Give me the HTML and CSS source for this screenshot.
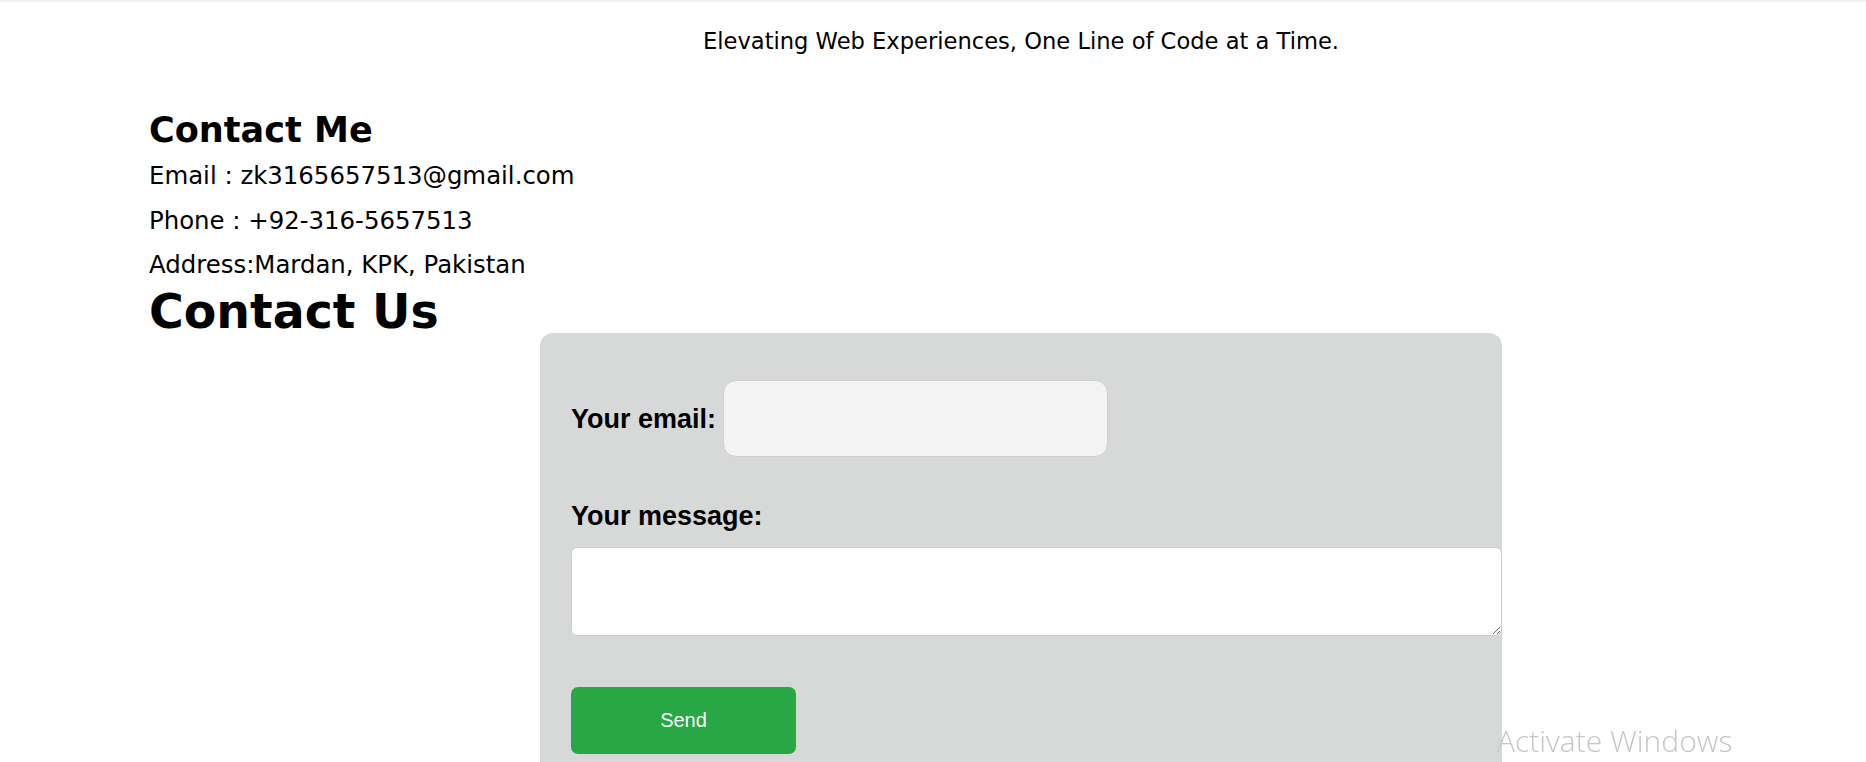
FILE: index.html
```html
<!DOCTYPE html>
<html lang="en">
<head>
<meta charset="utf-8">
<title>Contact</title>
<link rel="stylesheet" href="styles.css">
</head>
<body>
  <header class="top">
    <p class="tagline">Elevating Web Experiences, One Line of Code at a Time.</p>
  </header>
  <main class="contact">
    <section class="info">
      <h2 class="info-title">Contact Me</h2>
      <p class="info-line">Email : zk3165657513@gmail.com</p>
      <p class="info-line">Phone : +92-316-5657513</p>
      <p class="info-line">Address:Mardan, KPK, Pakistan</p>
    </section>
    <h1 class="form-title">Contact Us</h1>
    <form class="form-box">
      <div class="email-row">
        <label class="label" for="email">Your email:</label>
        <input class="email-input" id="email" type="email">
      </div>
      <label class="label msg-label" for="msg">Your message:</label>
      <textarea class="msg-input" id="msg"></textarea>
      <button class="send" type="button">Send</button>
    </form>
  </main>
  <div class="watermark">Activate Windows</div>
</body>
</html>
```
FILE: styles.css
```css
html, body {
  margin: 0;
  padding: 0;
  background: #ffffff;
  color: #000;
  font-family: "DejaVu Sans", Verdana, sans-serif;
  overflow: hidden;
}

.top {
  border-top: 2px solid #f2f2f2;
  padding: 26px 0 0 176px;
  text-align: center;
}

.tagline {
  margin: 0;
  font-size: 22.6px;
  line-height: 27px;
}

.contact {
  padding-left: 149px;
}

.info {
  padding-top: 55px;
}

.info-title {
  margin: 0;
  font-size: 35.1px;
  line-height: 40px;
  font-weight: bold;
}

.info-line {
  margin: 12px 0 0;
  font-size: 24.4px;
  line-height: 28px;
}

.info-line + .info-line {
  margin-top: 16.5px;
}

.form-title {
  margin: 12px 0 0;
  font-size: 47.4px;
  line-height: 42px;
  font-weight: bold;
}

.form-box {
  margin: 0 0 0 391px;
  width: 962px;
  min-height: 460px;
  box-sizing: border-box;
  padding: 47px 0 0 31px;
  background: #d7d9d9;
  border-radius: 13px;
  display: flex;
  flex-direction: column;
  align-items: flex-start;
}

.email-row {
  display: flex;
  align-items: center;
  gap: 7px;
}

.label {
  font-family: "Liberation Sans", Arial, sans-serif;
  font-weight: bold;
  font-size: 27px;
  line-height: 30px;
}

.email-input {
  width: 385px;
  height: 77px;
  box-sizing: border-box;
  background: #f3f3f3;
  border: 1px solid #cfcfcf;
  border-radius: 13px;
  margin: 0;
}

.msg-label {
  margin-top: 44px;
}

.msg-input {
  margin-top: 16px;
  width: 100%;
  height: 89px;
  box-sizing: border-box;
  background: #ffffff;
  border: 1px solid #cccccc;
  border-radius: 6px;
  font-family: "Liberation Sans", Arial, sans-serif;
}

.send {
  margin-top: 51px;
  width: 225px;
  height: 67px;
  border: none;
  border-radius: 7px;
  background: #28a745;
  color: #ffffff;
  font-family: "Liberation Sans", Arial, sans-serif;
  font-size: 20px;
}

.watermark {
  position: fixed;
  left: 1497px;
  top: 722px;
  font-family: "Open Sans", "Noto Sans", sans-serif;
  font-weight: 300;
  font-size: 30px;
  line-height: 38px;
  color: #c6c6c6;
}
```
